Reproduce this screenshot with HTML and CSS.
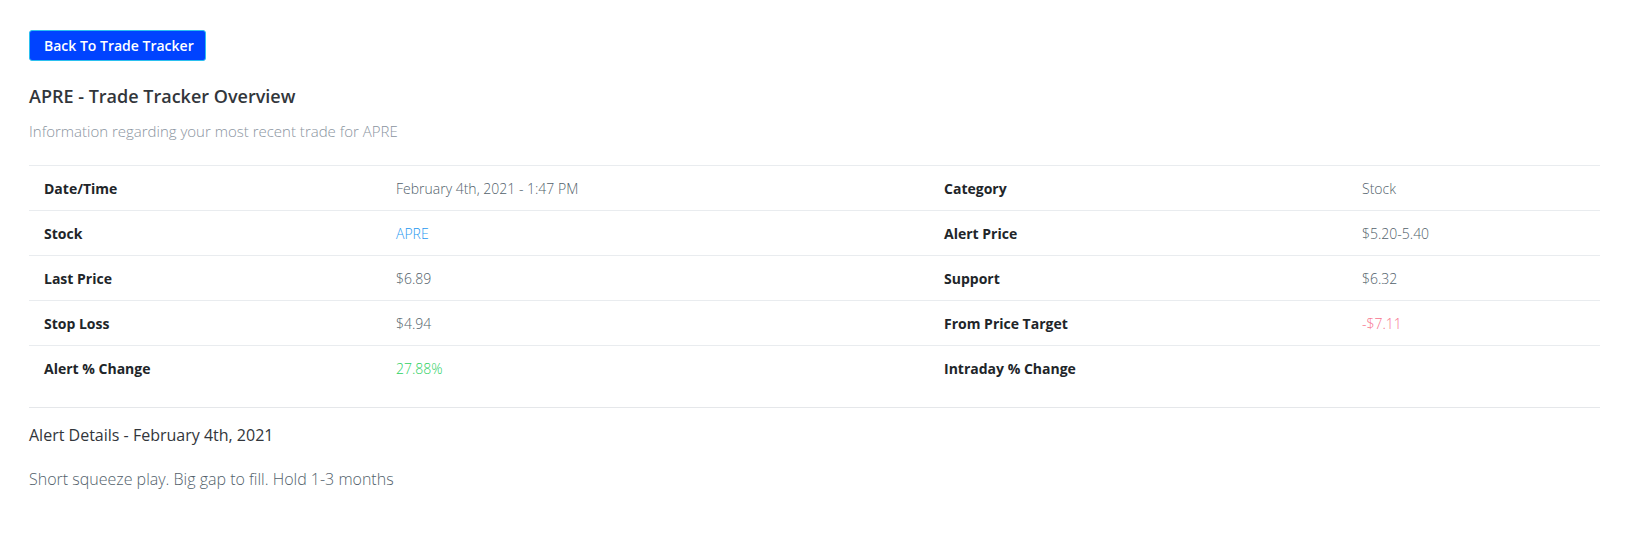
FILE: index.html
```html
<!DOCTYPE html>
<html>
<head>
<meta charset="utf-8">
<link rel="stylesheet" href="styles.css">
</head>
<body>
<div class="page">
  <button class="back-btn">Back To Trade Tracker</button>
  <h2 class="title">APRE - Trade Tracker Overview</h2>
  <p class="subtitle">Information regarding your most recent trade for APRE</p>
  <table class="info">
    <colgroup>
      <col class="c1"><col class="c2"><col class="c3"><col class="c4">
    </colgroup>
    <tbody>
      <tr>
        <th>Date/Time</th><td>February 4th, 2021 - 1:47 PM</td>
        <th>Category</th><td>Stock</td>
      </tr>
      <tr>
        <th>Stock</th><td><a class="link">APRE</a></td>
        <th>Alert Price</th><td>$5.20-5.40</td>
      </tr>
      <tr>
        <th>Last Price</th><td>$6.89</td>
        <th>Support</th><td>$6.32</td>
      </tr>
      <tr>
        <th>Stop Loss</th><td>$4.94</td>
        <th>From Price Target</th><td class="neg">-$7.11</td>
      </tr>
      <tr>
        <th>Alert % Change</th><td class="pos">27.88%</td>
        <th>Intraday % Change</th><td></td>
      </tr>
    </tbody>
  </table>
  <hr class="divider">
  <h3 class="details-title">Alert Details - February 4th, 2021</h3>
  <p class="details-text">Short squeeze play. Big gap to fill. Hold 1-3 months</p>
</div>
</body>
</html>
```

FILE: styles.css
```css
* { box-sizing: border-box; }
html, body { margin: 0; padding: 0; background: #fff; }
body { font-family: "Open Sans", "Noto Sans", sans-serif; color: #32325d; }
.page { padding: 30px 29px 20px 29px; }
.back-btn {
  display: block;
  height: 31px;
  width: 177px;
  padding: 0 14px;
  background: #0043ff;
  border: 1px solid #2bc0f0;
  border-radius: 3px;
  color: #fff;
  font-family: "Open Sans", sans-serif;
  font-size: 14px;
  font-weight: 600;
  line-height: 29px;
  text-align: left;
  white-space: nowrap;
}
.title {
  margin: 22px 0 0 0;
  font-size: 18px;
  line-height: 26px;
  font-weight: 600;
  color: #32363b;
}
.subtitle {
  margin: 11px 0 0 0;
  font-size: 15px;
  line-height: 22px;
  font-weight: 300;
  color: #8a94a0;
}
.info {
  margin-top: 23px;
  width: 1571px;
  border-collapse: collapse;
  table-layout: fixed;
  font-size: 14px;
}
.c1 { width: 352px; }
.c2 { width: 548px; }
.c3 { width: 418px; }
.c4 { width: 253px; }
.info th, .info td {
  border-top: 1px solid #e9ecef;
  padding: 13px 15px 11px 15px;
  line-height: 20px;
  height: 45px;
  text-align: left;
  vertical-align: middle;
}
.info th { font-weight: 700; color: #212529; }
.info td { font-weight: 300; color: #525f6b; }
.link { color: #1e98f0; }
.pos { color: #2dd05f !important; }
.neg { color: #f7708c !important; }
.divider {
  margin: 16px 0 0 0;
  border: 0;
  border-top: 1px solid #e5e7ea;
  height: 0;
}
.details-title {
  margin: 15px 0 0 0;
  font-size: 16px;
  line-height: 24px;
  font-weight: 400;
  color: #32363b;
}
.details-text {
  margin: 20px 0 0 0;
  font-size: 16px;
  line-height: 24px;
  font-weight: 300;
  color: #525f6b;
}
```
